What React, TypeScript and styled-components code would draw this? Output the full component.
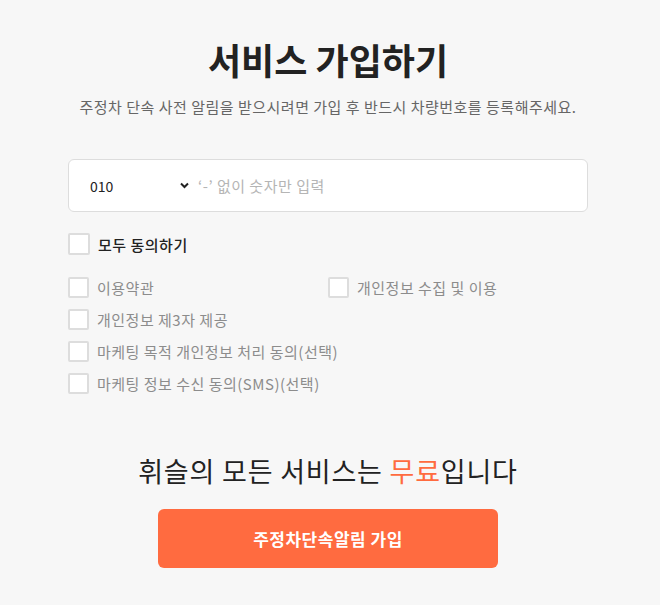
import React from 'react'
import styled, { createGlobalStyle } from 'styled-components'

const GlobalStyle = createGlobalStyle`
  html, body {
    margin: 0;
    padding: 0;
    background: #f7f7f7;
  }
  body {
    font-family: "Noto Sans CJK KR", "Noto Sans", sans-serif;
    color: #222;
  }
`

const Page = styled.div`
  width: 656px;
  padding: 33px 0 0;
`

const Inner = styled.div`
  width: 520px;
  margin: 0 auto;
`

const Title = styled.h1`
  margin: 0;
  text-align: center;
  font-size: 36px;
  font-weight: 700;
  line-height: 52px;
  color: #222;
`

const Sub = styled.p`
  margin: 12px 0 0;
  text-align: center;
  font-size: 15px;
  letter-spacing: 0.5px;
  line-height: 20px;
  color: #666;
`

const InputBox = styled.div`
  margin-top: 42px;
  height: 51px;
  background: #fff;
  border: 1px solid #ddd;
  border-radius: 6px;
  display: flex;
  align-items: center;
`

const Prefix = styled.div`
  width: 99px;
  padding-left: 21px;
  display: flex;
  align-items: center;
  justify-content: space-between;
  font-size: 14px;
  color: #222;
`

const Chevron = styled.svg`
  width: 9px;
  height: 7px;
`

const Phone = styled.input`
  flex: 1;
  margin-left: 9px;
  padding: 0;
  border: none;
  outline: none;
  background: transparent;
  font-family: inherit;
  font-size: 15px;
  letter-spacing: 0.5px;
  color: #222;
  &::placeholder {
    color: #b5b5b5;
  }
`

const AllRow = styled.label`
  margin-top: 21px;
  display: flex;
  align-items: center;
  gap: 8px;
  font-size: 15px;
  letter-spacing: 0.5px;
  font-weight: 500;
  color: #222;
`

const Box = styled.span<{ $size: number }>`
  width: ${p => p.$size}px;
  height: ${p => p.$size}px;
  box-sizing: border-box;
  border: 2px solid #ddd;
  background: #fff;
  border-radius: 2px;
  flex: none;
`

const Terms = styled.div`
  margin-top: 22px;
  display: grid;
  grid-template-columns: 260px 260px;
  row-gap: 12px;
`

const Term = styled.label`
  display: flex;
  align-items: center;
  gap: 8px;
  height: 20px;
  white-space: nowrap;
  font-size: 15px;
  letter-spacing: 0.5px;
  color: #8c8c8c;
`

const Free = styled.p`
  margin: 60px 0 0;
  text-align: center;
  font-size: 27px;
  letter-spacing: 0.8px;
  line-height: 36px;
  color: #222;
`

const Accent = styled.span`
  color: #ff6b3f;
`

const Submit = styled.button`
  display: block;
  margin: 20px auto 0;
  width: 340px;
  height: 59px;
  border: none;
  border-radius: 6px;
  background: #ff6b40;
  color: #fff;
  font-family: inherit;
  font-size: 17px;
  letter-spacing: 0.5px;
  font-weight: 700;
`

const terms = [
  '이용약관',
  '개인정보 수집 및 이용',
  '개인정보 제3자 제공',
  '',
  '마케팅 목적 개인정보 처리 동의(선택)',
  '',
  '마케팅 정보 수신 동의(SMS)(선택)',
]

const App = () => {
  return (
    <Page>
      <GlobalStyle />
      <Inner>
        <Title>서비스 가입하기</Title>
        <Sub>주정차 단속 사전 알림을 받으시려면 가입 후 반드시 차량번호를 등록해주세요.</Sub>
        <InputBox>
          <Prefix>
            010
            <Chevron viewBox="0 0 9 7">
              <path d="M1 1.5 L4.5 5 L8 1.5" fill="none" stroke="#222" strokeWidth="2" />
            </Chevron>
          </Prefix>
          <Phone placeholder="‘-’ 없이 숫자만 입력" />
        </InputBox>
        <AllRow>
          <Box $size={22} />
          모두 동의하기
        </AllRow>
        <Terms>
          {terms.map((t, i) =>
            t ? (
              <Term key={i}>
                <Box $size={21} />
                {t}
              </Term>
            ) : (
              <span key={i} />
            )
          )}
        </Terms>
        <Free>
          휘슬의 모든 서비스는 <Accent>무료</Accent>입니다
        </Free>
        <Submit>주정차단속알림 가입</Submit>
      </Inner>
    </Page>
  )
}

export default App
